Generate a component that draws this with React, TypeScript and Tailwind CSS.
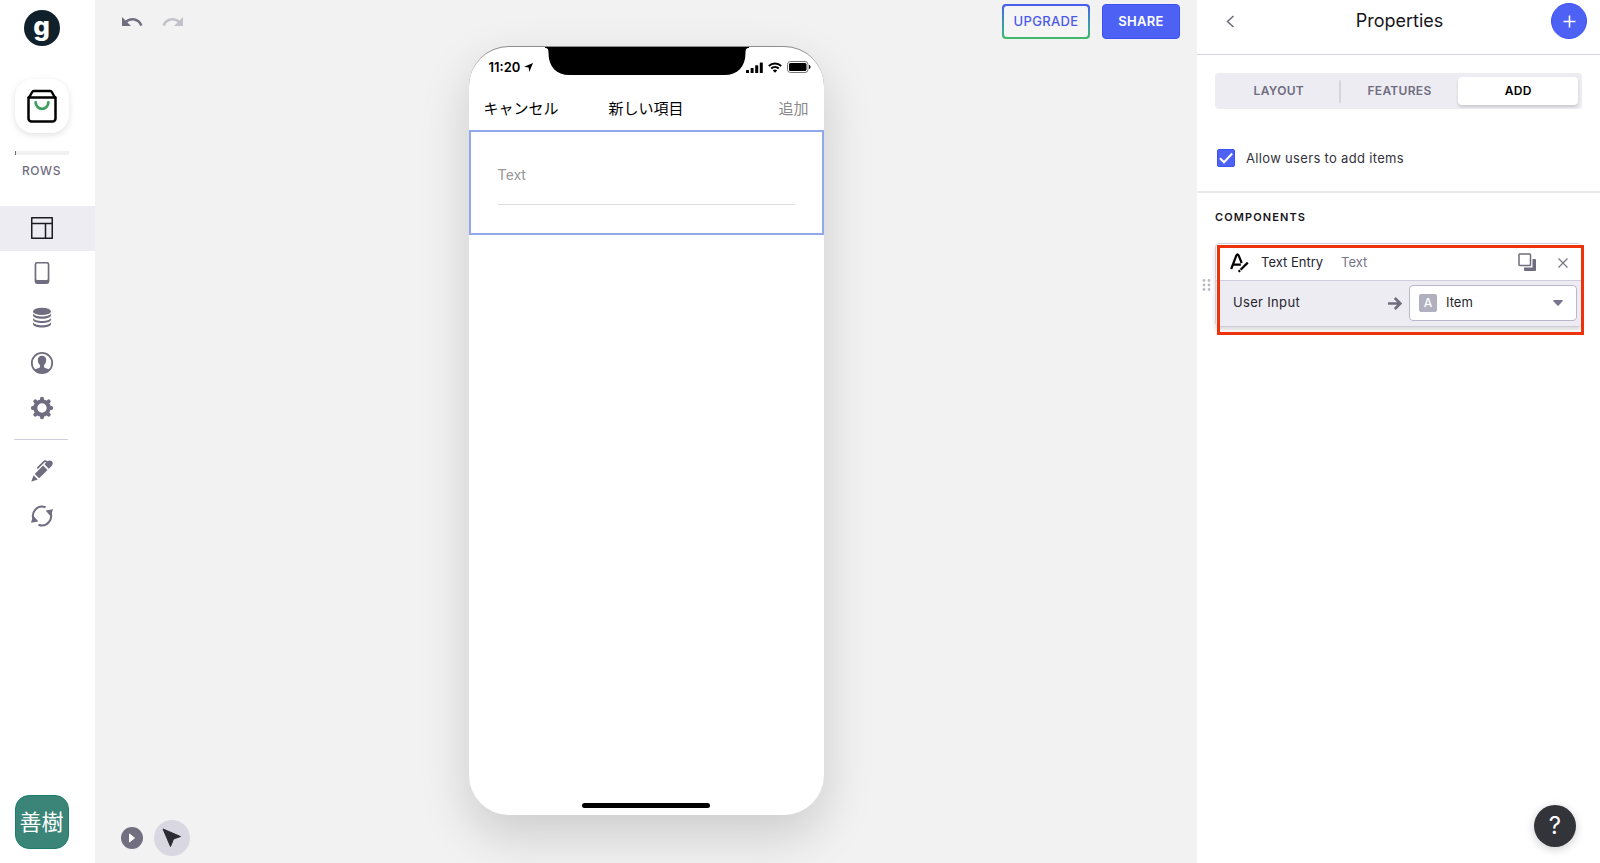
import { useState } from 'react';
import type { ReactNode } from 'react';

type NavItem = {
  label: string;
  icon: ReactNode;
};

const NAV_ITEMS: NavItem[] = [
  { label: 'Layout', icon: <LayoutIcon /> },
  { label: 'App', icon: <PhoneIcon /> },
  { label: 'Data', icon: <DataIcon /> },
  { label: 'Users', icon: <UserIcon /> },
  { label: 'Settings', icon: <GearIcon /> },
];

const TOOL_ITEMS: NavItem[] = [
  { label: 'Edit', icon: <PenIcon /> },
  { label: 'Reload', icon: <ReloadIcon /> },
];

const TABS = ['LAYOUT', 'FEATURES', 'ADD'];

function LayoutIcon() {
  return (
    <svg width="24" height="24" viewBox="0 0 24 24" fill="none" stroke="currentColor" strokeWidth="1.5">
      <path d="M1.75 1.75h20.5v20.5H1.75zM1.75 7.5h20.5M15.5 7.5v14.75" strokeLinejoin="round" />
    </svg>
  );
}

function PhoneIcon() {
  return (
    <svg width="24" height="24" viewBox="0 0 24 24" fill="currentColor" fillRule="evenodd">
      <path d="M7 1h10a2.4 2.4 0 0 1 2.4 2.4v17.2A2.4 2.4 0 0 1 17 23H7a2.4 2.4 0 0 1-2.4-2.4V3.4A2.4 2.4 0 0 1 7 1zm.3 1.6a1 1 0 0 0-1 1V18a1 1 0 0 0 1 1h9.4a1 1 0 0 0 1-1V3.6a1 1 0 0 0-1-1z" />
    </svg>
  );
}

function DataIcon() {
  return (
    <svg width="24" height="24" viewBox="0 0 24 24" fill="currentColor">
      <ellipse cx="12" cy="5.4" rx="9" ry="3.6" />
      <path d="M3 7.6c1 1.9 4.5 3 9 3s8-1.1 9-3v1.6c0 2-4 3.5-9 3.5s-9-1.5-9-3.5z" />
      <path d="M3 11.9c1 1.9 4.5 3 9 3s8-1.1 9-3v1.6c0 2-4 3.5-9 3.5s-9-1.5-9-3.5z" />
      <path d="M3 16.2c1 1.9 4.5 3 9 3s8-1.1 9-3v1.9c0 2-4 3.5-9 3.5s-9-1.5-9-3.5z" />
    </svg>
  );
}

function UserIcon() {
  return (
    <svg width="24" height="24" viewBox="0 0 24 24" fill="none">
      <circle cx="12" cy="12" r="10.2" stroke="currentColor" strokeWidth="1.8" />
      <path
        d="M12 4.8c-2.7 0-4.2 1.8-4.2 4.3 0 2.3.9 4 2.1 5v1.8c0 .5-.4.9-1.1 1.1l-4.3 1.5A10 10 0 0 0 12 22a10 10 0 0 0 7.5-3.5L15.2 17c-.7-.2-1.1-.6-1.1-1.1v-1.8c1.2-1 2.1-2.7 2.1-5 0-2.5-1.5-4.3-4.2-4.3z"
        fill="currentColor"
      />
    </svg>
  );
}

function GearIcon() {
  return (
    <svg width="24" height="24" viewBox="0 0 24 24" fill="none" stroke="currentColor">
      <circle cx="12" cy="12" r="6.7" strokeWidth="4" />
      <path
        d="M12 2.8v2M12 19.2v2M2.800 12h2M19.200 12h2M5.300 5.300l1.400 1.400M17.300 17.300l1.400 1.400M5.300 18.700l1.400-1.400M17.300 6.700l1.400-1.400"
        strokeWidth="4"
        strokeLinecap="round"
      />
    </svg>
  );
}

function PenIcon() {
  return (
    <svg width="24" height="24" viewBox="0 0 24 24" fill="currentColor">
      <path d="M1.2 22.8l2.400-6.600 4.200 4.200z" />
      <path d="M4.800 14.900l8.300-8.300 4.400 4.400-8.300 8.300z" />
      <path d="M14.4 5.3l2.500-2.500c1.600-1.600 3.700-1.800 5-.6s1.100 3.400-.5 5l-2.600 2.500z" />
      <path d="M7.800 8.900l6-6c1-1 1.900-1 3-.2" fill="none" stroke="currentColor" strokeWidth="1.7" strokeLinecap="round" />
    </svg>
  );
}

function ReloadIcon() {
  return (
    <svg width="24" height="24" viewBox="0 0 24 24" fill="none" stroke="currentColor" strokeWidth="2">
      <path d="M4.200 16.500A9.200 9.200 0 0 1 15.500 3.300M19.800 7.500A9.200 9.200 0 0 1 8.500 20.700" />
      <path d="M15.600 6.600l7.400-1.400-2.200 7.200zM8.400 17.400L1 18.800l2.200-7.200z" fill="currentColor" stroke="none" />
    </svg>
  );
}

function Sidebar() {
  const [active, setActive] = useState('Layout');

  return (
    <nav className="flex w-[95px] shrink-0 flex-col bg-white text-[#6f6d7f]">
      <div className="flex flex-col items-center pt-[10px] pr-3">
        <a
          href="#home"
          aria-label="Home"
          className="flex h-9 w-9 items-center justify-center rounded-full bg-[#10212b] pb-[5px] text-[26px] leading-none font-extrabold text-white"
        >
          g
        </a>
        <button
          type="button"
          aria-label="Current app"
          className="mt-[33px] flex h-[54px] w-[54px] items-center justify-center rounded-[18px] bg-white shadow-[0_2px_6px_rgba(0,0,0,0.12)]"
        >
          <svg width="32" height="36" viewBox="0 0 32 36" fill="none" strokeLinejoin="round">
            <path d="M2.500 9.500v21a3 3 0 0 0 3 3h21a3 3 0 0 0 3-3v-21z" stroke="#000" strokeWidth="2.500" />
            <path d="M2.500 10.500L6.200 4q.5-1 1.600-1h16.400q1.100 0 1.600 1l3.700 6.500" stroke="#000" strokeWidth="2.500" />
            <path d="M9.700 14.500a6.300 6.300 0 0 0 12.600 0" stroke="#3f9f62" strokeWidth="2.800" strokeLinecap="round" />
          </svg>
        </button>
        <div className="mt-[18px] h-1 w-[54px] bg-[#f1f1f1]">
          <div className="h-1 w-px bg-[#6f6d7f]" />
        </div>
        <span className="mt-2 text-xs leading-4 font-medium tracking-wider">ROWS</span>
      </div>

      <div className="mt-[27px]">
        {NAV_ITEMS.map(item => (
          <button
            key={item.label}
            type="button"
            aria-label={item.label}
            onClick={() => setActive(item.label)}
            className={`flex h-[45px] w-full items-center justify-center pr-3 pb-[2px] ${
              active === item.label ? 'bg-[#edecf2] text-[#1b1a22]' : ''
            }`}
          >
            {item.icon}
          </button>
        ))}
      </div>

      <div className="mt-2 mr-[27px] mb-[9px] ml-[14px] h-px bg-[#d0cfdf]" />

      <div>
        {TOOL_ITEMS.map(item => (
          <button
            key={item.label}
            type="button"
            aria-label={item.label}
            className="flex h-[45px] w-full items-center justify-center pr-3 pb-[2px]"
          >
            {item.icon}
          </button>
        ))}
      </div>

      <div className="mt-auto flex justify-center pr-3 pb-[14px]">
        <button
          type="button"
          className="flex h-[54px] w-[54px] items-center justify-center rounded-[14px] border border-[#1d7d6b] bg-[#3b8578] text-[22px] leading-none text-white"
        >
          善樹
        </button>
      </div>
    </nav>
  );
}

function StatusBar() {
  return (
    <div className="relative flex h-10 items-center justify-between pr-[13px] pl-5">
      <div className="flex items-center gap-1">
        <span className="text-[13px] leading-4 font-semibold">11:20</span>
        <svg width="9" height="9" viewBox="0 0 9 9" fill="currentColor">
          <path d="M9 0L5.300 9 4.600 4.400 0 3.700z" />
        </svg>
      </div>
      <svg className="absolute top-0 left-[76px]" width="204" height="28" viewBox="0 0 204 28" fill="#000">
        <path d="M0 0h204v1c-3 0-3.500 1.500-3.500 5 0 14-8 22-21 22h-155C11.500 28 3.500 20 3.500 6c0-3.500-.5-5-3.500-5z" />
      </svg>
      <div className="flex items-center gap-[5px]">
        <svg width="17" height="11" viewBox="0 0 17 11" fill="currentColor">
          <rect x="0" y="8" width="3" height="3" rx="0.600" />
          <rect x="4.600" y="6" width="3" height="5" rx="0.600" />
          <rect x="9.200" y="3.300" width="3" height="7.700" rx="0.600" />
          <rect x="13.800" y="0.500" width="3" height="10.500" rx="0.600" />
        </svg>
        <svg width="14" height="11" viewBox="0 0 14 11" fill="none" stroke="currentColor" strokeWidth="1.900">
          <path d="M.8 4A9 9 0 0 1 13.200 4M3.200 6.500a5.500 5.500 0 0 1 7.600 0" />
          <path d="M7 10.800L4.800 8.500a3.200 3.200 0 0 1 4.400 0z" fill="currentColor" stroke="none" />
        </svg>
        <svg width="24" height="12" viewBox="0 0 24 12">
          <rect x="0.500" y="0.500" width="20.500" height="11" rx="3" fill="none" stroke="#777" />
          <rect x="2" y="2" width="17.500" height="8" rx="1.600" fill="currentColor" />
          <path d="M22 4v4c1-.4 1.500-1 1.500-2S23 4.400 22 4z" fill="currentColor" />
        </svg>
      </div>
    </div>
  );
}

function PhonePreview() {
  return (
    <div className="flex w-[355px] flex-col overflow-hidden rounded-[40px] border-t border-[#8d8d8d] bg-white text-black shadow-[0_20px_50px_rgba(0,0,0,0.16)]">
      <StatusBar />
      <div className="grid h-[43px] grid-cols-3 items-center px-[15px] text-[15px] leading-5">
        <button type="button" className="text-left">キャンセル</button>
        <h2 className="text-center">新しい項目</h2>
        <button type="button" className="text-right text-[#8a8a8a]">追加</button>
      </div>
      <div className="border-2 border-[#91a8ec] px-[27px] pt-[14px] pb-7">
        <input
          type="text"
          aria-label="Text"
          placeholder="Text"
          className="h-[59px] w-full border-b border-[#dedede] font-[Roboto] text-[15px] outline-none placeholder:text-[#9b9b9b]"
        />
      </div>
      <div className="mx-auto mt-auto mb-[7px] h-[5px] w-32 rounded-full bg-black" />
    </div>
  );
}

function Canvas() {
  return (
    <main className="flex min-w-0 flex-1 flex-col bg-[#f2f2f2]">
      <div className="flex h-[46px] items-start justify-between pr-[17px] pl-[25px]">
        <div className="flex gap-[17px] pt-[10px] text-[#6f6d7f]">
          <button type="button" aria-label="Undo">
            <svg width="24" height="24" viewBox="0 0 24 24" fill="currentColor">
              <path d="M12.500 8c-2.650 0-5.050.99-6.900 2.600L2 7v9h9l-3.620-3.620c1.390-1.160 3.160-1.880 5.120-1.880 3.540 0 6.550 2.310 7.600 5.500l2.370-.78C21.080 11.030 17.150 8 12.500 8z" />
            </svg>
          </button>
          <button type="button" aria-label="Redo" className="text-[#c2c1ca]">
            <svg width="24" height="24" viewBox="0 0 24 24" fill="currentColor">
              <path d="M18.400 10.600C16.550 8.990 14.150 8 11.500 8c-4.650 0-8.580 3.030-9.960 7.220L3.900 16c1.050-3.190 4.050-5.500 7.600-5.500 1.950 0 3.730.72 5.120 1.880L13 16h9V7l-3.600 3.600z" />
            </svg>
          </button>
        </div>
        <div className="flex gap-3 pt-1 text-[13px] font-semibold tracking-wide">
          <button type="button" className="h-[35px] w-[88px] rounded bg-linear-to-b from-[#4a5af0] to-[#42b965] p-[2px]">
            <span className="flex h-full items-center justify-center rounded-[3px] bg-[#f5f5f5] font-medium text-[#4b5be8]">UPGRADE</span>
          </button>
          <button type="button" className="h-[35px] w-[78px] rounded border border-[#3b50f5] bg-[#4d62f5] text-white">
            SHARE
          </button>
        </div>
      </div>

      <div className="flex flex-1 justify-center">
        <PhonePreview />
      </div>

      <div className="z-10 flex h-12 items-start gap-[11px] pt-[5px] pl-[26px]">
        <button type="button" aria-label="Play" className="mt-[7px] flex h-[22px] w-[22px] items-center justify-center rounded-full bg-[#727080]">
          <svg width="8" height="10" viewBox="0 0 8 10" fill="#fff" stroke="#fff" strokeLinejoin="round">
            <path d="M1.500 1l5 4-5 4z" />
          </svg>
        </button>
        <button type="button" aria-label="Select" className="flex h-9 w-9 items-center justify-center rounded-full bg-[#d8d7e2]">
          <svg width="20" height="20" viewBox="0 0 20 20" fill="#2b2b31" stroke="#2b2b31" strokeLinejoin="round">
            <path d="M1 1l17.500 7.500-7 2.500-3 7.500z" />
          </svg>
        </button>
      </div>
    </main>
  );
}

function ComponentCard() {
  return (
    <div className="grid grid-cols-[13px_1fr] items-center pr-4 pl-[5px]">
      <svg width="9" height="12" viewBox="0 0 9 12" fill="#bbbac6">
        <circle cx="2" cy="1.500" r="1.400" />
        <circle cx="7" cy="1.500" r="1.400" />
        <circle cx="2" cy="6" r="1.400" />
        <circle cx="7" cy="6" r="1.400" />
        <circle cx="2" cy="10.500" r="1.400" />
        <circle cx="7" cy="10.500" r="1.400" />
      </svg>
      <div className="relative">
        <div className="mr-[2px] overflow-hidden rounded border border-[#cfcedd] text-[13px] shadow-[0_3px_4px_rgba(0,0,0,0.15)]">
          <div className="flex h-9 items-center bg-white pt-px pr-3 pl-[14px]">
            <svg width="19" height="20" viewBox="0 0 19 20" fill="none" stroke="#000" strokeWidth="2.200">
              <path d="M1.200 16L6.300 2.600q1.200-2.400 2.400 0l3 7.400M3.600 11.600h7.200" />
              <path d="M8.600 18.800L17.800 9.600" strokeWidth="2.200" strokeDasharray="2 0.800 12" />
            </svg>
            <span className="ml-3 text-[#26252d]">Text Entry</span>
            <span className="ml-[18px] text-[#77758a]">Text</span>
            <button type="button" aria-label="Duplicate" className="ml-auto">
              <svg width="19" height="19" viewBox="0 0 19 19" fill="none">
                <path d="M6 14.500h8.500V6H17a1 1 0 0 1 1 1v10a1 1 0 0 1-1 1H7a1 1 0 0 1-1-1z" fill="#6f6d7f" />
                <rect x="1" y="1" width="11.500" height="11.500" rx="0.800" fill="#fff" stroke="#6f6d7f" strokeWidth="1.500" />
              </svg>
            </button>
            <button type="button" aria-label="Remove" className="ml-5">
              <svg width="12" height="12" viewBox="0 0 12 12" stroke="#77758a" strokeWidth="1.200">
                <path d="M1.500 1.500l9 9M10.500 1.500l-9 9" />
              </svg>
            </button>
          </div>
          <div className="flex h-[46px] items-center border-t border-[#cfcedd] bg-[#edecf2] pr-1 pb-px pl-[17px]">
            <label htmlFor="user-input" className="tracking-wide text-[#26252d]">User Input</label>
            <svg className="mr-[7px] ml-auto" width="14" height="13" viewBox="0 0 14 13" fill="none" stroke="#6f6d7f" strokeWidth="2.600">
              <path d="M0 6.500h12M6.800 1l5.500 5.500-5.500 5.500" />
            </svg>
            <div className="relative">
              <select
                id="user-input"
                className="h-9 w-[168px] appearance-none rounded border border-[#b9b8cb] bg-white pl-9 text-[#26252d]"
              >
                <option>Item</option>
              </select>
              <span className="pointer-events-none absolute top-[9px] left-[10px] flex h-[18px] w-[18px] items-center justify-center rounded-[2px] bg-[#b1b0be] text-xs font-medium text-white">
                A
              </span>
              <svg className="pointer-events-none absolute top-[15px] right-[14px]" width="10" height="6" viewBox="0 0 10 6" fill="#77758f">
                <path d="M1 0h8q1.200.3.500 1.200L5.700 5.600q-.7.500-1.400 0L.5 1.200Q-.2.300 1 0z" />
              </svg>
            </div>
          </div>
        </div>
        {/* highlight frame */}
        <div className="pointer-events-none absolute right-0 -bottom-2 left-[2px] top-[2px] border-[3px] border-[#ee320b]" />
      </div>
    </div>
  );
}

function PropertiesPanel() {
  const [tab, setTab] = useState('ADD');
  const [allowAdd, setAllowAdd] = useState(true);

  return (
    <aside className="relative flex w-[403px] shrink-0 flex-col bg-white">
      <header className="grid h-[55px] grid-cols-[36px_1fr_36px] items-center border-b border-[#d5d4de] pr-[13px] pb-3 pl-[15px]">
        <button type="button" aria-label="Back" className="flex justify-center">
          <svg width="9" height="13" viewBox="0 0 9 13" fill="none" stroke="#6f6d7f" strokeWidth="1.600">
            <path d="M7.500 1L1.500 6.500l6 5.500" />
          </svg>
        </button>
        <h1 className="text-center text-lg text-[#17161c]">Properties</h1>
        <button type="button" aria-label="Add component" className="flex h-9 w-9 items-center justify-center rounded-full border border-[#3b50f5] bg-[#4d62f5]">
          <svg width="13" height="13" viewBox="0 0 13 13" stroke="#fff" strokeWidth="1.600">
            <path d="M6.500 .5v12M.5 6.500h12" />
          </svg>
        </button>
      </header>

      <div className="mt-[18px] mr-[18px] ml-[18px] flex h-9 items-center rounded bg-[#edecf2] p-1 text-xs font-semibold tracking-wide">
        {TABS.map((name, i) => (
          <div key={name} className="flex h-7 flex-1 items-center">
            {i === 1 && <div className="h-[23px] w-[2px] rounded bg-[#d5d4e0]" />}
            <button
              type="button"
              onClick={() => setTab(name)}
              className={`h-full flex-1 rounded ${
                tab === name ? 'bg-white text-black shadow-[0_2px_3px_rgba(0,0,0,0.15)]' : 'text-[#6f6d7f]'
              }`}
            >
              {name}
            </button>
          </div>
        ))}
      </div>

      <div className="flex h-[84px] items-center border-b-2 border-[#e9e8ee] pt-4 pl-5">
        <div className="relative h-[18px] w-[18px]">
          <input
            id="allow-add"
            type="checkbox"
            checked={allowAdd}
            onChange={e => setAllowAdd(e.target.checked)}
            className="peer block h-[18px] w-[18px] appearance-none rounded-[2px] border border-[#3b50f5] bg-white checked:bg-[#4d62f5]"
          />
          <svg className="pointer-events-none absolute inset-0 hidden peer-checked:block" width="18" height="18" viewBox="0 0 18 18" fill="none" stroke="#fff" strokeWidth="2">
            <path d="M3 9.200l4 4L15.200 4.500" />
          </svg>
        </div>
        <label htmlFor="allow-add" className="ml-[11px] pt-px text-[13px] tracking-wide text-[#33323b]">Allow users to add items</label>
      </div>

      <h2 className="mt-4 mb-[18px] ml-[18px] text-[11px] leading-4 font-semibold tracking-widest text-[#17161c]">COMPONENTS</h2>
      <ComponentCard />

      <button
        type="button"
        aria-label="Help"
        className="mt-auto mr-6 mb-4 flex h-[42px] w-[42px] items-center justify-center self-end rounded-full bg-[#33333a] text-2xl text-white shadow-[0_2px_10px_rgba(0,0,0,0.2)]"
      >
        ?
      </button>
    </aside>
  );
}

export default function App() {
  return (
    <div className="flex min-h-screen bg-white font-[Inter,'Noto_Sans_CJK_JP',sans-serif]">
      <Sidebar />
      <Canvas />
      <PropertiesPanel />
    </div>
  );
}
